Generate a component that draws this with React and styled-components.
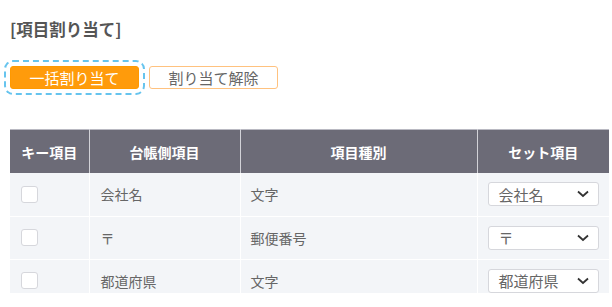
import React from "react";
import styled, { createGlobalStyle } from "styled-components";

const Global = createGlobalStyle`
  html, body { margin: 0; padding: 0; background: #fff; }
  body { font-family: "Noto Sans CJK JP", "Noto Sans", sans-serif; color: #555; }
`;

const Page = styled.div`
  padding: 18px 3px 0 10px;
  width: 612px;
  box-sizing: border-box;
`;

const Title = styled.h2`
  margin: 0;
  font-size: 16.5px;
  line-height: 22px;
  font-weight: 700;
  color: #555;
`;

const ButtonRow = styled.div`
  display: flex;
  gap: 10px;
  margin-top: 26px;
`;

const Button = styled.button`
  font-family: inherit;
  height: 23px;
  width: 129px;
  padding: 0;
  font-size: 15px;
  line-height: 21px;
  border-radius: 3px;
  cursor: pointer;
  border: 1px solid ${(p) => (p.$primary ? "#ff9900" : "#ffc27f")};
  background: ${(p) => (p.$primary ? "#ff9b0b" : "#fff")};
  color: ${(p) => (p.$primary ? "#fff" : "#666")};
  outline: ${(p) => (p.$focused ? "2px dashed #66c4ee" : "none")};
  outline-offset: 4px;
`;

const TableWrap = styled.div`
  margin-top: 40px;
  height: 164px;
  overflow: hidden;
`;

const Table = styled.table`
  border-collapse: collapse;
  width: 599px;
  table-layout: fixed;
`;

const Th = styled.th`
  background: #6c6b77;
  color: #fff;
  font-size: 14px;
  font-weight: 700;
  height: 43px;
  padding: 0;
  text-align: center;
  border-top: 1px solid #b9b9c2;
  border-left: 1px solid #d2d2d8;
  border-right: 1px solid #d2d2d8;
  &:first-child { border-left: none; }
  &:last-child { border-right: none; }
`;

const Td = styled.td`
  background: #f3f5f8;
  height: 43px;
  padding: 0 10px 0 ${(p) => p.$pl || "10px"};
  font-size: 14px;
  color: #666;
  border: 1px solid #fff;
  border-top: none;
  &:first-child { border-left: none; }
  &:last-child { border-right: none; }
  vertical-align: middle;
  box-sizing: border-box;
`;

const Check = styled.span`
  display: block;
  width: 15px;
  height: 15px;
  background: #fff;
  border: 1px solid #d6d7dc;
  border-radius: 3px;
`;

const Select = styled.div`
  display: flex;
  align-items: center;
  justify-content: space-between;
  height: 24px;
  box-sizing: border-box;
  background: #fff;
  border: 1px solid #d6d7dc;
  border-radius: 3px;
  padding: 0 9px 0 10px;
  font-size: 15px;
  color: #666;
`;

const Chevron = () => (
  <svg width="12" height="8" viewBox="0 0 12 8">
    <path d="M1 1.5 L6 6 L11 1.5" fill="none" stroke="#333" strokeWidth="1.8" />
  </svg>
);

const rows = [
  { name: "会社名", type: "文字", set: "会社名" },
  { name: "〒", type: "郵便番号", set: "〒" },
  { name: "都道府県", type: "文字", set: "都道府県" },
];

export default function App() {
  return (
    <>
      <Global />
      <Page>
        <Title>[項目割り当て]</Title>
        <ButtonRow>
          <Button $primary $focused>一括割り当て</Button>
          <Button>割り当て解除</Button>
        </ButtonRow>
        <TableWrap>
          <Table>
            <colgroup>
              <col style={{ width: 79 }} />
              <col style={{ width: 151 }} />
              <col style={{ width: 237 }} />
              <col style={{ width: 132 }} />
            </colgroup>
            <thead>
              <tr>
                <Th>キー項目</Th>
                <Th>台帳側項目</Th>
                <Th>項目種別</Th>
                <Th>セット項目</Th>
              </tr>
            </thead>
            <tbody>
              {rows.map((r) => (
                <tr key={r.name}>
                  <Td $pl="11px"><Check /></Td>
                  <Td $pl="11px">{r.name}</Td>
                  <Td>{r.type}</Td>
                  <Td>
                    <Select>
                      <span>{r.set}</span>
                      <Chevron />
                    </Select>
                  </Td>
                </tr>
              ))}
            </tbody>
          </Table>
        </TableWrap>
      </Page>
    </>
  );
}
